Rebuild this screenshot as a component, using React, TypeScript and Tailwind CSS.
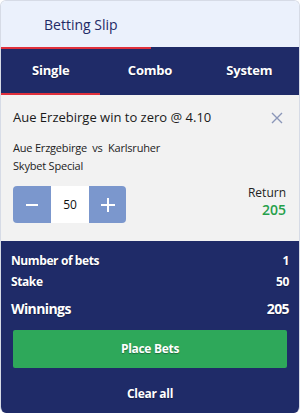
import React from "react";

export default function App() {
  const shadow = { textShadow: "0 1px 1px rgba(0,0,0,0.35)" } as React.CSSProperties;
  return (
    <div className="w-[300px] h-[413px] bg-white" style={{ fontFamily: '"Open Sans", "Noto Sans", sans-serif' }}>
      <div className="w-[300px] h-[413px] flex flex-col rounded-[6px] border-x border-t border-[#d6dbe6] overflow-hidden">
        <div className="h-[46px] bg-[#ebf1fc] flex items-center pl-[43px]">
          <span className="text-[14px] text-[#1e2a66] font-medium">Betting Slip</span>
        </div>
        <div className="h-[2px] bg-[#1f2b68] flex">
          <div className="w-[150px] h-full bg-[#e0303c]" />
        </div>
        <div className="h-[46px] bg-[#1f2b68] flex">
          <div className="w-[100px] flex flex-col">
            <div className="flex-1 flex items-center justify-center text-white font-bold text-[13px] tracking-[-0.2px]" style={shadow}>Single</div>
            <div className="h-[2px] bg-[#e0303c]" />
          </div>
          <div className="w-[100px] flex items-center justify-center text-white font-bold text-[13px] tracking-[-0.2px] pb-[2px]" style={shadow}>Combo</div>
          <div className="w-[100px] flex items-center justify-center text-white font-bold text-[13px] tracking-[-0.2px] pb-[2px]" style={shadow}>System</div>
        </div>
        <div className="h-[146px] bg-[#f2f2f2] px-[12px] pt-[13px] flex flex-col">
          <div className="flex items-center justify-between h-[20px]">
            <span className="text-[13px] text-[#1a1a1a]">Aue Erzebirge win to zero @ 4.10</span>
            <svg width="12" height="12" viewBox="0 0 12 12" className="mr-[4px]">
              <path d="M1 1L11 11M11 1L1 11" stroke="#8a96b8" strokeWidth="1.4" />
            </svg>
          </div>
          <div className="mt-[11px] text-[11px] leading-[18px] text-[#222] tracking-[-0.2px]">Aue Erzgebirge&nbsp; vs&nbsp; Karlsruher</div>
          <div className="text-[11px] leading-[18px] text-[#222] tracking-[-0.2px]">Skybet Special</div>
          <div className="mt-[11px] flex items-center justify-between">
            <div className="flex h-[37px] rounded-[4px] overflow-hidden">
              <div className="w-[38px] bg-[#7b97cd] flex items-center justify-center">
                <svg width="12" height="12" viewBox="0 0 12 12"><path d="M0 6H12" stroke="white" strokeWidth="2" /></svg>
              </div>
              <div className="w-[38px] bg-white flex items-center justify-center text-[12px] text-[#111]">50</div>
              <div className="w-[37px] bg-[#7b97cd] flex items-center justify-center">
                <svg width="14" height="14" viewBox="0 0 14 14"><path d="M0 7H14M7 0V14" stroke="white" strokeWidth="2" /></svg>
              </div>
            </div>
            <div className="flex flex-col items-end pr-[1px] -mt-[6px]">
              <span className="text-[12px] text-[#222] leading-[17px]">Return</span>
              <span className="text-[14px] font-semibold text-[#26a04a] leading-[18px]">205</span>
            </div>
          </div>
        </div>
        <div className="flex-1 bg-[#1f2b68] px-[10px] pt-[10px] flex flex-col text-white">
          <div className="flex justify-between items-center h-[20px] text-[12px] font-bold tracking-[-0.4px]" style={shadow}>
            <span>Number of bets</span><span>1</span>
          </div>
          <div className="flex justify-between items-center h-[20px] mt-[1px] text-[12px] font-bold tracking-[-0.4px]" style={shadow}>
            <span>Stake</span><span>50</span>
          </div>
          <div className="flex justify-between items-center h-[24px] mt-[4px] text-[14px] font-bold tracking-[-0.6px]" style={shadow}>
            <span>Winnings</span><span>205</span>
          </div>
          <div className="mt-[10px] mx-[2px] h-[38px] rounded-[2px] bg-[#2ea85a] flex items-center justify-center text-[12px] font-bold tracking-[-0.3px]" style={shadow}>
            Place Bets
          </div>
          <div className="mt-[17px] text-center text-[12px] font-bold tracking-[-0.3px]" style={shadow}>Clear all</div>
        </div>
      </div>
    </div>
  );
}
